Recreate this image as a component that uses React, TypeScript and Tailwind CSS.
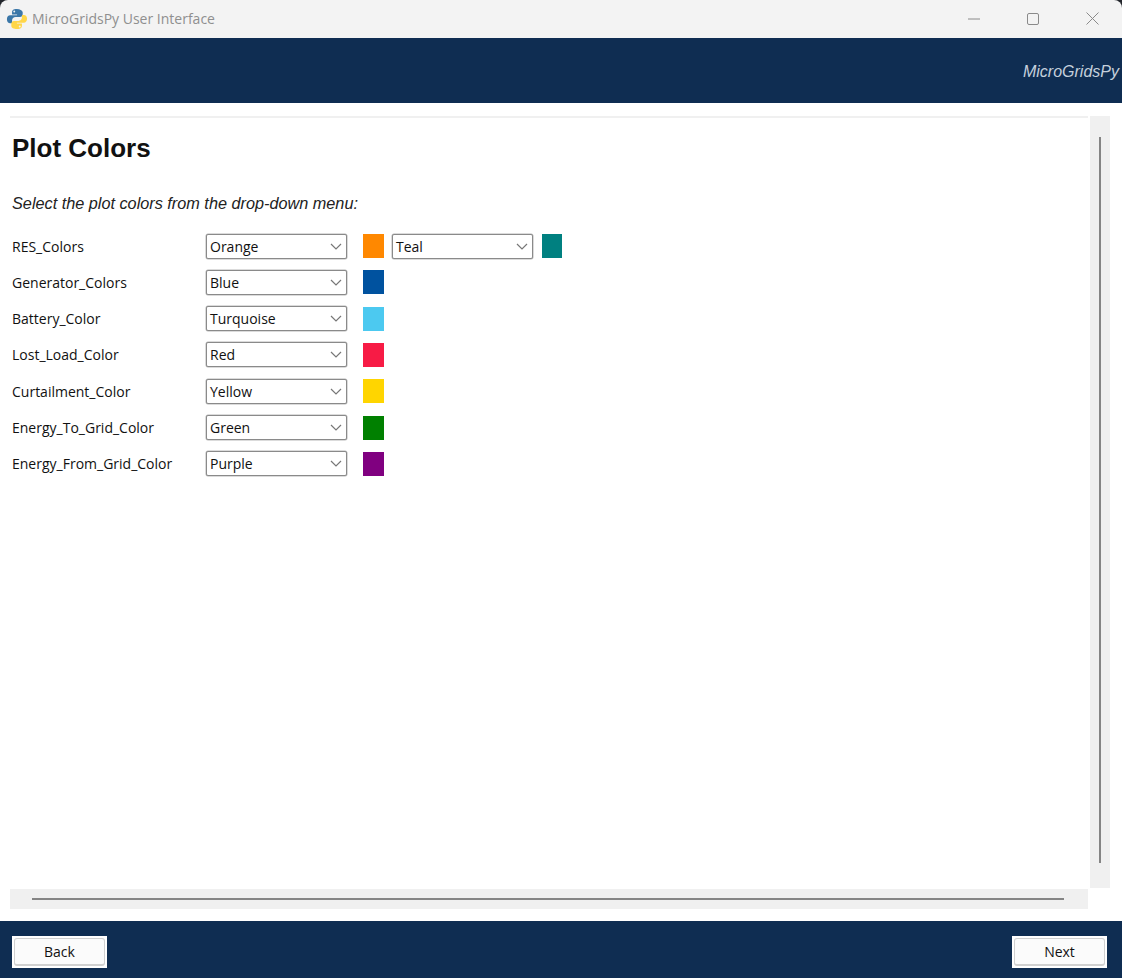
const colorRows = [
  { label: "RES_Colors", value: "Orange", swatch: "bg-[#ff8800]" },
  { label: "Generator_Colors", value: "Blue", swatch: "bg-[#00529f]" },
  { label: "Battery_Color", value: "Turquoise", swatch: "bg-[#4cc9f0]" },
  { label: "Lost_Load_Color", value: "Red", swatch: "bg-[#f71b45]" },
  { label: "Curtailment_Color", value: "Yellow", swatch: "bg-[#ffd500]" },
  { label: "Energy_To_Grid_Color", value: "Green", swatch: "bg-[#008000]" },
  { label: "Energy_From_Grid_Color", value: "Purple", swatch: "bg-[#800080]" },
];

function PythonLogo() {
  return (
    <svg width="22" height="22" viewBox="0 0 24 24">
      <path
        fill="#3b77a8"
        d="M11.9 1C7.6 1 6.6 2.7 6.6 4.6V7h5.5v.9H4.6C2.5 7.9 1 9.6 1 12.2c0 2.700 1.500 4.300 3.500 4.300h2.100v-2.900c0-2 1.700-3.700 3.800-3.700h4.900c1.600 0 2.900-1.300 2.900-3V4.300C17.200 2.500 15.600 1 11.900 1zM9 2.800a1 1 0 1 1 0 2.100 1 1 0 0 1 0-2.100z"
      />
      <path
        fill="#ffd648"
        d="M12.100 23c4.300 0 5.300-1.700 5.300-3.600V17h-5.500v-.9h7.500c2.100 0 3.600-1.700 3.600-4.300 0-2.700-1.500-4.300-3.500-4.300h-2.100v2.900c0 2-1.700 3.700-3.800 3.700H8.700c-1.600 0-2.900 1.300-2.900 3v2.600C5.800 21.500 8.400 23 12.100 23zM15 21.200a1 1 0 1 1 0-2.100 1 1 0 0 1 0 2.100z"
      />
    </svg>
  );
}

function TitleBar() {
  return (
    <div className="flex h-[38px] items-center rounded-t-lg bg-[#f3f3f3] pb-[1px] pl-[6px]">
      <PythonLogo />
      <span className="ml-[4px] font-['Open_Sans',sans-serif] text-[14px] text-[#8f8f8f]">
        MicroGridsPy User Interface
      </span>
      <div className="ml-auto flex items-center text-[#8a8a8a]">
        <svg width="12" height="2" viewBox="0 0 12 2" className="mr-[47px]">
          <path d="M0 1h12" stroke="currentColor" strokeWidth="1" />
        </svg>
        <svg width="12" height="12" viewBox="0 0 12 12" className="mr-[47px]">
          <rect x="0.500" y="0.500" width="11" height="11" rx="1.500" fill="none" stroke="currentColor" />
        </svg>
        <svg width="13" height="13" viewBox="0 0 13 13" className="mr-[23px]">
          <path d="M0.500 0.500l12 12M12.500 0.500l-12 12" stroke="currentColor" strokeWidth="1" />
        </svg>
      </div>
    </div>
  );
}

function ColorSelect({ value }: { value: string }) {
  return (
    <div className="flex h-[25px] w-[141px] items-center justify-between rounded-[2px] border border-[#8a8a8a] bg-white pr-[4px] pl-[3px] text-[14px] text-[#111] shadow-[0_0_0_0.5px_#b8b8b8]">
      <span>{value}</span>
      <svg width="12" height="7" viewBox="0 0 12 7" className="text-[#777]">
        <path d="M1 1l5 5 5-5" fill="none" stroke="currentColor" strokeWidth="1.200" />
      </svg>
    </div>
  );
}

function NavButton({ label }: { label: string }) {
  return (
    <button className="h-[32px] w-[95px] rounded-none bg-white p-[2px] font-['Open_Sans',sans-serif] text-[14px] text-[#111]">
      <span className="flex h-full w-full items-center justify-center rounded-[3px] border border-b-2 border-[#d0d0d0] bg-[#fbfbfb]">
        {label}
      </span>
    </button>
  );
}

export default function App() {
  return (
    <div className="flex h-[978px] w-[1122px] flex-col overflow-hidden bg-[#23262c] font-['Open_Sans',sans-serif]">
      <TitleBar />

      <header className="flex h-[65px] items-center justify-end bg-[#0f2d52] pr-[3px]">
        <span className="mt-[2px] font-['Liberation_Sans',sans-serif] text-[16px] text-[#c5d0dc] italic">
          MicroGridsPy
        </span>
      </header>

      <main className="flex min-h-0 flex-1 flex-col bg-white pt-[13px] pr-[12px] pl-[10px]">
        <div className="flex h-[772px] gap-[2px]">
          <div className="flex-1 border-t-2 border-[#f0f0f0] pl-[2px]">
            <h1 className="mt-[15px] font-['Liberation_Sans',sans-serif] text-[26px] leading-[30px] font-bold text-[#111]">
              Plot Colors
            </h1>
            <p className="mt-[31px] font-['Liberation_Sans',sans-serif] text-[16.250px] leading-[18px] text-[#222] italic">
              Select the plot colors from the drop-down menu:
            </p>
            <div className="mt-[21.500px] flex flex-col gap-[11.330px]">
              {colorRows.map((row, i) => (
                <div key={row.label} className="flex h-[25px] items-center">
                  <span className="w-[194px] text-[14px] text-[#111]">{row.label}</span>
                  <ColorSelect value={row.value} />
                  <div className={`ml-[16px] h-[24px] w-[21px] ${row.swatch}`} />
                  {i === 0 && (
                    <>
                      <div className="ml-[8px]">
                        <ColorSelect value="Teal" />
                      </div>
                      <div className="ml-[9px] h-[24px] w-[20px] bg-[#008080]" />
                    </>
                  )}
                </div>
              ))}
            </div>
          </div>
          <div className="flex w-[20px] justify-center bg-[#f0f0f0] pt-[21px] pb-[25px]">
            <div className="w-[2px] bg-[#858585]" />
          </div>
        </div>

        <div className="mt-[1px] mr-[22px] flex h-[20px] items-center bg-[#f0f0f0] pr-[24px] pl-[22px]">
          <div className="h-[2px] flex-1 bg-[#858585]" />
        </div>
      </main>

      <footer className="flex h-[57px] items-start justify-between bg-[#0f2d52] pt-[15px] pr-[15px] pl-[12px]">
        <NavButton label="Back" />
        <NavButton label="Next" />
      </footer>
    </div>
  );
}
